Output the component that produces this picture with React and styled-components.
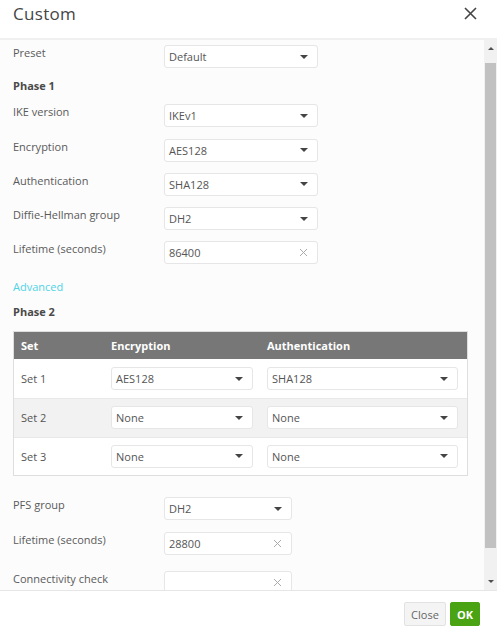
import styled, { createGlobalStyle } from 'styled-components'

const GlobalStyle = createGlobalStyle`
  html, body {
    margin: 0;
    padding: 0;
    background: #ffffff;
  }
  body {
    font-family: "Open Sans", "Liberation Sans", sans-serif;
    color: #555;
  }
`

const Dialog = styled.div`
  width: 497px;
  height: 636px;
  display: flex;
  flex-direction: column;
  background: #fff;
`

const Header = styled.div`
  height: 40px;
  display: flex;
  align-items: flex-start;
  justify-content: space-between;
  padding: 2px 20px 0 13px;
  box-sizing: border-box;
  border-bottom: 2px solid #f0f0f0;
`

const Title = styled.h2`
  margin: 0;
  font-size: 17px;
  font-weight: 400;
  color: #454545;
  letter-spacing: 0.3px;
`

const CloseX = styled.button`
  border: 0;
  background: none;
  padding: 0;
  margin-top: 5px;
  cursor: pointer;
  display: flex;
`

const Body = styled.div`
  flex: 1;
  display: flex;
  min-height: 0;
  background: #fcfcfc;
`

const Content = styled.div`
  flex: 1;
  overflow: hidden;
  padding: 5px 18px 0 13px;
`

const Row = styled.div`
  display: flex;
  align-items: flex-start;
  margin-top: ${p => p.$top || 0}px;
  margin-bottom: 11.25px;
`

const Label = styled.div`
  width: 151px;
  font-size: 11px;
  line-height: 14px;
  padding-top: 1px;
  color: #5a5a5a;
`

const Field = styled.div`
  width: ${p => p.$w || 154}px;
  height: 23px;
  box-sizing: border-box;
  border: 1px solid #e6e6e6;
  border-radius: 3px;
  background: #fff;
  display: flex;
  align-items: center;
  justify-content: space-between;
  padding: 0 9px 0 4px;
  font-size: 11px;
  color: #555;
`

const Caret = styled.span`
  width: 0;
  height: 0;
  border-left: 4px solid transparent;
  border-right: 4px solid transparent;
  border-top: 4px solid #444;
`

const Heading = styled.div`
  font-size: 11px;
  font-weight: 700;
  color: #4a4a4a;
  margin: ${p => p.$m || '0'};
  line-height: 14px;
`

const Link = styled.a`
  display: block;
  font-size: 11px;
  line-height: 14px;
  color: #4fd3e6;
  margin: 16px 0 11px;
  cursor: pointer;
`

const Table = styled.div`
  width: 453px;
  border: 1px solid #dedede;
  margin-bottom: 21px;
`

const TRow = styled.div`
  display: grid;
  grid-template-columns: 90px 156px 1fr;
  align-items: center;
  height: ${p => (p.$head ? 27 : 38.7)}px;
  background: ${p => (p.$head ? '#777' : p.$alt ? '#f2f2f2' : '#fff')};
  color: ${p => (p.$head ? '#fff' : '#555')};
  font-weight: ${p => (p.$head ? 700 : 400)};
  font-size: 11px;
  border-top: ${p => (p.$first || p.$head ? '0' : '1px solid #e8e8e8')};
  box-sizing: border-box;
`

const Cell = styled.div`
  padding: 0 7px;
  display: flex;
  align-items: center;
  &:last-child {
    padding-right: 8px;
  }
`

const Scrollbar = styled.div`
  width: 13px;
  background: #f1f1f1;
  display: flex;
  flex-direction: column;
  align-items: center;
`

const Arrow = styled.span`
  height: 17px;
  display: flex;
  align-items: center;
  justify-content: center;
  &::after {
    content: '';
    border-left: 3px solid transparent;
    border-right: 3px solid transparent;
    ${p => (p.$up ? 'border-bottom: 3px solid #505050;' : 'border-top: 3px solid #505050;')}
  }
`

const Thumb = styled.div`
  width: 11px;
  flex: 1;
  background: #c1c1c1;
  margin: 6px 0 25px;
`

const Footer = styled.div`
  height: 46px;
  border-top: 1px solid #e6e6e6;
  display: flex;
  align-items: center;
  justify-content: flex-end;
  gap: 4px;
  padding: 0 17px 0 0;
  box-sizing: border-box;
  background: #fff;
`

const Button = styled.button`
  height: 24px;
  padding: 0 ${p => (p.$primary ? 6 : 5)}px;
  min-width: ${p => (p.$primary ? 30 : 42)}px;
  border-radius: 2px;
  font-family: inherit;
  font-size: 11px;
  font-weight: ${p => (p.$primary ? 700 : 400)};
  border: 1px solid ${p => (p.$primary ? '#4aa312' : '#e2e2e2')};
  background: ${p => (p.$primary ? '#4aa312' : '#f4f4f4')};
  color: ${p => (p.$primary ? '#fff' : '#666')};
  margin-top: 1px;
`

const ClearIcon = () => (
  <svg width="9" height="9" viewBox="0 0 9 9">
    <path d="M1 1 L8 8 M8 1 L1 8" stroke="#aaa" strokeWidth="1" />
  </svg>
)

const Select = ({ value, w }) => (
  <Field $w={w}>
    <span>{value}</span>
    <Caret />
  </Field>
)

const Input = ({ value, w }) => (
  <Field $w={w}>
    <span>{value}</span>
    <ClearIcon />
  </Field>
)

const FormRow = ({ label, top, children }) => (
  <Row $top={top}>
    <Label>{label}</Label>
    {children}
  </Row>
)

const sets = [
  { name: 'Set 1', enc: 'AES128', auth: 'SHA128' },
  { name: 'Set 2', enc: 'None', auth: 'None' },
  { name: 'Set 3', enc: 'None', auth: 'None' },
]

const App = () => (
  <Dialog>
    <GlobalStyle />
    <Header>
      <Title>Custom</Title>
      <CloseX aria-label="close">
        <svg width="13" height="13" viewBox="0 0 13 13">
          <path d="M1 1 L12 12 M12 1 L1 12" stroke="#444" strokeWidth="1.6" />
        </svg>
      </CloseX>
    </Header>
    <Body>
      <Content>
        <FormRow label="Preset"><Select value="Default" /></FormRow>
        <Heading $m="0 0 11px">Phase 1</Heading>
        <FormRow label="IKE version"><Select value="IKEv1" /></FormRow>
        <FormRow label="Encryption"><Select value="AES128" /></FormRow>
        <FormRow label="Authentication"><Select value="SHA128" /></FormRow>
        <FormRow label="Diffie-Hellman group"><Select value="DH2" /></FormRow>
        <FormRow label="Lifetime (seconds)"><Input value="86400" /></FormRow>
        <Link>Advanced</Link>
        <Heading $m="0 0 12px">Phase 2</Heading>
        <Table>
          <TRow $head>
            <Cell>Set</Cell>
            <Cell>Encryption</Cell>
            <Cell>Authentication</Cell>
          </TRow>
          {sets.map((s, i) => (
            <TRow key={s.name} $alt={i === 1} $first={i === 0}>
              <Cell>{s.name}</Cell>
              <Cell><Select value={s.enc} w={142} /></Cell>
              <Cell><Select value={s.auth} w={191} /></Cell>
            </TRow>
          ))}
        </Table>
        <FormRow label="PFS group"><Select value="DH2" w={128} /></FormRow>
        <FormRow label="Lifetime (seconds)"><Input value="28800" w={128} /></FormRow>
        <FormRow label="Connectivity check" top={16}><Input value="" w={128} /></FormRow>
      </Content>
      <Scrollbar>
        <Arrow $up />
        <Thumb />
        <Arrow />
      </Scrollbar>
    </Body>
    <Footer>
      <Button>Close</Button>
      <Button $primary>OK</Button>
    </Footer>
  </Dialog>
)

export default App
